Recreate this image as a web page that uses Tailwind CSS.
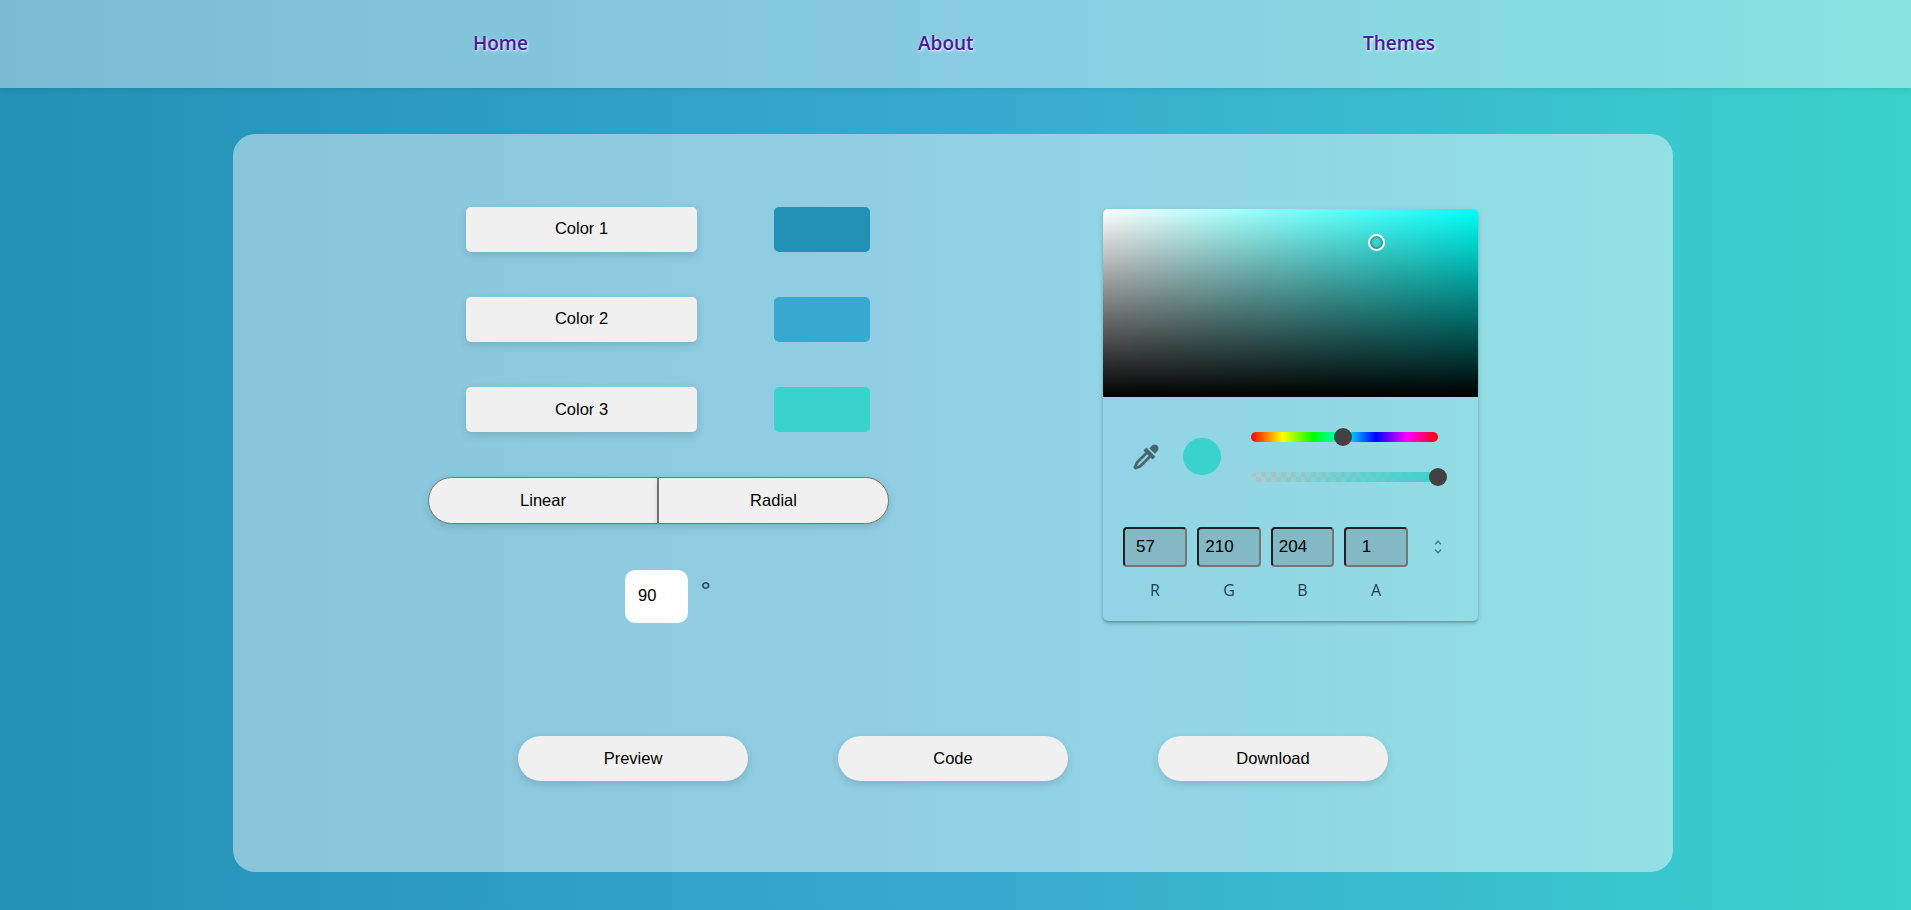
<!doctype html>
<html lang="en">
<head>
<meta charset="utf-8">
<title>Gradient generator</title>
<script src="https://cdn.jsdelivr.net/npm/@tailwindcss/browser@4"></script>
</head>
<body class="w-[1911px] h-[910px] overflow-hidden bg-[linear-gradient(90deg,#2390b5,#39a9d0,#39d2cc)] font-['Liberation_Sans',sans-serif] text-[16.5px] text-black">
<nav class="h-[88px] bg-white/40 shadow-[0_2px_6px_rgba(0,0,0,0.08)] flex items-center pl-[473px] pb-[2px] font-['Open_Sans',sans-serif] font-semibold text-[19px] text-[#4f1a96] [text-shadow:1px_1px_3px_#ffffff]">
  <a class="w-[445px]">Home</a>
  <a class="w-[445px]">About</a>
  <a>Themes</a>
</nav>
<main class="ml-[233px] mt-[46px] w-[1440px] h-[738px] rounded-[22px] bg-white/45 pt-[73px]">
  <div class="flex items-start h-[525px]">
    <div class="w-[870px] pl-[195px]">
      <div class="flex flex-col gap-[45px] ml-[38px]">
        <div class="flex gap-[77px]"><button class="w-[231px] h-[45px] rounded-[5px] bg-[#f0f0f0] shadow-[0_3px_8px_rgba(0,0,0,0.14)] pb-[3px]">Color 1</button><div class="w-[96px] h-[45px] rounded-[5px] bg-[#2390b5]"></div></div>
        <div class="flex gap-[77px]"><button class="w-[231px] h-[45px] rounded-[5px] bg-[#f0f0f0] shadow-[0_3px_8px_rgba(0,0,0,0.14)] pb-[3px]">Color 2</button><div class="w-[96px] h-[45px] rounded-[5px] bg-[#39a9d0]"></div></div>
        <div class="flex gap-[77px]"><button class="w-[231px] h-[45px] rounded-[5px] bg-[#f0f0f0] shadow-[0_3px_8px_rgba(0,0,0,0.14)]">Color 3</button><div class="w-[96px] h-[45px] rounded-[5px] bg-[#39d2cc]"></div></div>
      </div>
      <div class="flex mt-[45px]">
        <button class="w-[230px] h-[47px] rounded-l-full border border-[#767676] bg-[#f0f0f0] shadow-[0_3px_8px_rgba(0,0,0,0.14)]">Linear</button>
        <button class="w-[231px] h-[47px] rounded-r-full border border-[#767676] bg-[#f0f0f0] shadow-[0_3px_8px_rgba(0,0,0,0.14)]">Radial</button>
      </div>
      <div class="flex items-start mt-[46px] ml-[197px]">
        <input value="90" class="w-[63px] h-[53px] rounded-[10px] bg-white pl-[13px] pb-[2px] outline-none">
        <span class="ml-[13px] mt-[6px] font-['Open_Sans',sans-serif] font-semibold text-[22px] leading-[27px] text-[#33495f]">°</span>
      </div>
    </div>
    <section class="w-[375px] h-[412px] mt-[2px] rounded-[5px] shadow-[0_2px_3px_-1px_rgba(0,0,0,0.3),0_3px_4px_rgba(0,0,0,0.08),0_1px_6px_rgba(0,0,0,0.06)]">
      <div class="relative h-[188px] rounded-t-[5px] bg-[linear-gradient(to_top,#000,transparent),linear-gradient(to_right,#fff,#00fff8)]">
        <div class="absolute left-[265px] top-[25px] w-[17px] h-[17px] rounded-full border-2 border-white shadow-[inset_0_0_3px_rgba(0,0,0,0.8)]"></div>
      </div>
      <div class="flex items-start pl-[28px] pt-[35px]">
        <svg class="mt-[10px]" width="30" height="30" viewBox="0 0 24 24" fill="#46666e" stroke="#46666e" stroke-width="0.3"><path d="M19.35,11.72L17.22,13.85L15.81,12.43L8.1,20.14L3.5,22L2,20.5L3.86,15.9L11.57,8.19L10.15,6.78L12.28,4.65L19.35,11.72M16.76,3C17.93,1.83 19.83,1.83 21,3C22.17,4.17 22.17,6.07 21,7.24L19.08,9.16L14.84,4.92L16.76,3M5.56,17.03L4.5,19.5L6.97,18.44L14.4,11L13,9.6L5.56,17.03Z"/></svg>
        <div class="ml-[22px] mt-[6px] w-[38px] h-[37px] rounded-full bg-[#39d2cc]"></div>
        <div class="ml-[30px] w-[187px] flex flex-col gap-[30px]">
          <div class="relative h-[10px] rounded-full bg-[linear-gradient(to_right,#f00,#ff0,#0f0,#0ff,#00f,#f0f,#f00)]">
            <div class="absolute left-[83px] top-[-4px] w-[18px] h-[18px] rounded-full bg-[#424242]"></div>
          </div>
          <div class="relative h-[10px] rounded-full bg-[repeating-conic-gradient(transparent_0_25%,#bdbdbd_0_50%)] bg-size-[10px_10px]">
            <div class="h-[10px] rounded-full bg-[linear-gradient(to_right,transparent,#39d2cc)]"></div>
            <div class="absolute left-[178px] top-[-4px] w-[18px] h-[18px] rounded-full bg-[#424242]"></div>
          </div>
        </div>
      </div>
      <div class="flex items-center gap-[10px] pl-[20px] mt-[45px] text-[17px]">
        <input value="57" class="w-[64px] h-[40px] rounded-[4px] border-2 border-[#767676] border-t-[#222] border-l-[#222] bg-[#83b9c4] text-center pr-[19px] outline-none">
        <input value="210" class="w-[64px] h-[40px] rounded-[4px] border-2 border-[#767676] border-t-[#222] border-l-[#222] bg-[#83b9c4] text-center pr-[19px] outline-none">
        <input value="204" class="w-[63px] h-[40px] rounded-[4px] border-2 border-[#767676] border-t-[#222] border-l-[#222] bg-[#83b9c4] text-center pr-[19px] outline-none">
        <input value="1" class="w-[64px] h-[40px] rounded-[4px] border-2 border-[#767676] border-t-[#222] border-l-[#222] bg-[#83b9c4] text-center pr-[19px] outline-none">
        <svg class="ml-[11px]" width="18" height="18" viewBox="0 0 24 24" fill="#4f747c"><path d="M12,18.17L8.83,15L7.41,16.41L12,21L16.59,16.41L15.17,15M12,5.83L15.17,9L16.59,7.59L12,3L7.41,7.59L8.83,9L12,5.83Z"/></svg>
      </div>
      <div class="flex gap-[10px] pl-[20px] mt-[12px] font-['Open_Sans',sans-serif] text-[16px] leading-[22px] text-[#1c3f52]">
        <span class="w-[64px] text-center">R</span>
        <span class="w-[64px] text-center">G</span>
        <span class="w-[63px] text-center">B</span>
        <span class="w-[64px] text-center">A</span>
      </div>
    </section>
  </div>
  <div class="flex gap-[90px] pl-[285px] mt-[4px]">
    <button class="w-[230px] h-[45px] rounded-full bg-[#f0f0f0] shadow-[0_3px_8px_rgba(0,0,0,0.14)]">Preview</button>
    <button class="w-[230px] h-[45px] rounded-full bg-[#f0f0f0] shadow-[0_3px_8px_rgba(0,0,0,0.14)]">Code</button>
    <button class="w-[230px] h-[45px] rounded-full bg-[#f0f0f0] shadow-[0_3px_8px_rgba(0,0,0,0.14)]">Download</button>
  </div>
</main>
</body>
</html>
